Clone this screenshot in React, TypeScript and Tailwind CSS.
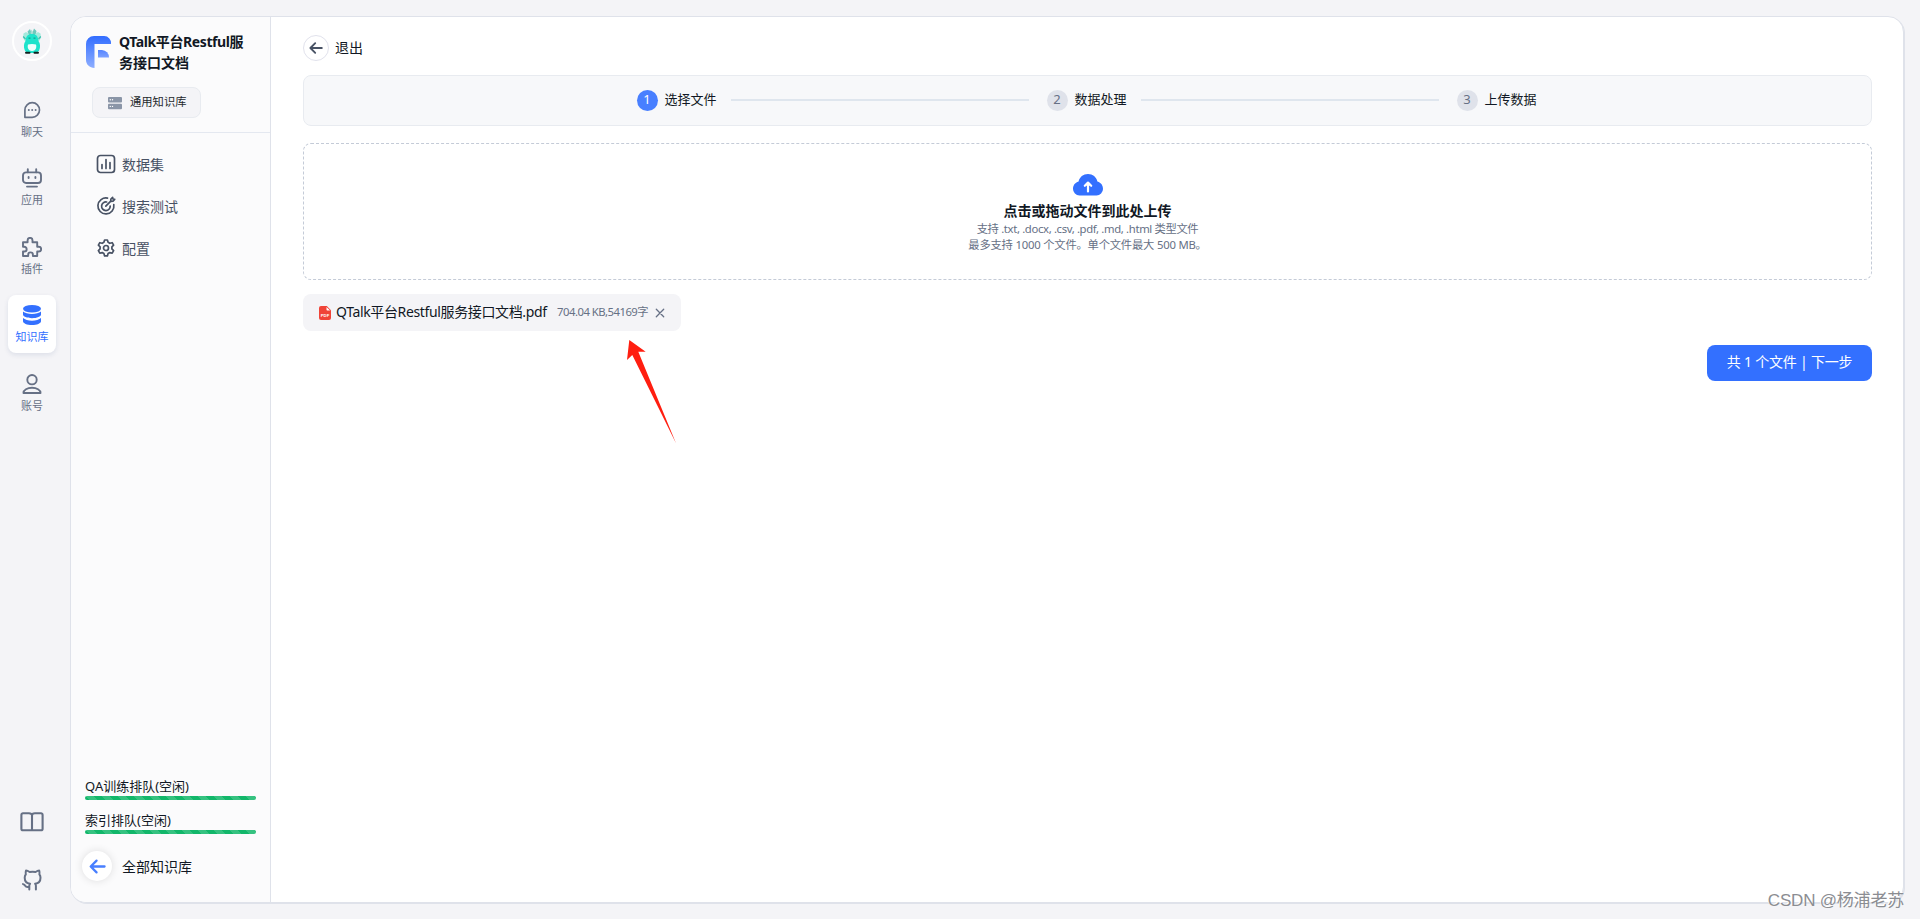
import type { ReactNode } from "react";

type IconProps = { className?: string };

function ChatIcon() {
  return (
    <svg viewBox="0 0 20 20" className="h-5 w-5" fill="none" stroke="currentColor" strokeWidth="1.7">
      <path d="M2.900 17.300V9.900A7.300 7.300 0 1 1 10.200 17.300Z" strokeLinejoin="round" />
      <g fill="currentColor" stroke="none">
        <circle cx="6.800" cy="10" r="1" />
        <circle cx="10.200" cy="10" r="1" />
        <circle cx="13.600" cy="10" r="1" />
      </g>
    </svg>
  );
}

function AppIcon() {
  return (
    <svg viewBox="0 0 20 20" className="h-5 w-5" fill="none" stroke="currentColor" strokeWidth="1.900" strokeLinecap="round">
      <rect x="1" y="4.400" width="18" height="10.600" rx="3" />
      <path d="M5.800 1.200v3M14.200 1.200v3M6.600 8.900v1.200M13.400 8.900v1.200M5 18.600h10" />
    </svg>
  );
}

function PluginIcon() {
  return (
    <svg viewBox="0 0 20 20" className="h-5 w-5" fill="none" stroke="currentColor" strokeWidth="1.900" strokeLinejoin="round">
      <path d="M1 5.200h4.600V3.300a2.300 2.300 0 0 1 4.900 0v1.900h4.700v4.600h1.600a2.300 2.300 0 0 1 0 4.700h-1.600V19h-4.300v-1.300a2.300 2.300 0 0 0-4.700 0V19H1v-4.500h1.300a2.300 2.300 0 0 0 0-4.700H1Z" />
    </svg>
  );
}

function DatabaseIcon() {
  return (
    <svg viewBox="0 0 20 20" className="h-5 w-5" fill="currentColor">
      <ellipse cx="10" cy="3.800" rx="9" ry="3.800" />
      <path d="M1 6.600c1.800 1.600 5.200 2.500 9 2.500s7.200-.9 9-2.500v2.900c0 2-4 3.700-9 3.700s-9-1.700-9-3.700Z" />
      <path d="M1 13.100c1.800 1.600 5.200 2.600 9 2.600s7.200-1 9-2.600v3.100c0 2.100-4 3.800-9 3.800s-9-1.700-9-3.800Z" />
    </svg>
  );
}

function AccountIcon() {
  return (
    <svg viewBox="0 0 20 20" className="h-5 w-5" fill="none" stroke="currentColor" strokeWidth="1.900" strokeLinejoin="round">
      <circle cx="10" cy="5.700" r="4.700" />
      <path d="M1.500 19c0-3 3.800-5.200 8.500-5.200s8.500 2.200 8.500 5.200Z" />
    </svg>
  );
}

function BookIcon() {
  return (
    <svg viewBox="0 0 24 20" className="h-5 w-6" fill="none" stroke="currentColor" strokeWidth="2.100" strokeLinejoin="round">
      <path d="M12 3.600C12 2 10.800 1.300 9 1.300H3A1.600 1.600 0 0 0 1.400 2.900v13.800a1.600 1.600 0 0 0 1.600 1.600h18a1.600 1.600 0 0 0 1.600-1.600V2.900A1.600 1.600 0 0 0 21 1.300h-6c-1.800 0-3 .7-3 2.300ZM12 3.600v14.500" />
    </svg>
  );
}

function GithubIcon() {
  return (
    <svg viewBox="0 0 22 22" className="h-[22px] w-[22px]" fill="none" stroke="currentColor" strokeWidth="2" strokeLinecap="round" strokeLinejoin="round">
      <path d="M8.300 20.600v-3.800c0-.9.3-1.600.8-2.100-3.300-.4-5.400-2-5.400-6 0-1.300.4-2.400 1.100-3.300-.3-1.300-.2-2.600.2-3.800 1.400.1 2.500.7 3.600 1.400a13 13 0 0 1 6 0c1.100-.7 2.200-1.300 3.600-1.400.4 1.200.5 2.500.2 3.800.7.900 1.100 2 1.100 3.300 0 4-2.100 5.600-5.400 6 .5.5.8 1.200.8 2.100v3.800M8.200 17.800c-1.700.5-3.300.3-4-1-.4-.8-1-1.400-2.200-1.700" />
    </svg>
  );
}

function Avatar() {
  return (
    <div className="flex h-10 w-10 shrink-0 items-center justify-center rounded-full border-2 border-white">
      <svg viewBox="0 0 20 26" className="h-[26px] w-5">
        <path d="M7 8 5.500 3.500 8 1l2 5 2-5.500L14.500 3 13.500 8Z" fill="#6fc9bd" />
        <path d="M9.300 1.500 11 4l-.8 4-1.700-3Z" fill="#a9ddd4" />
        <path d="M1.500 5.500 4 4l3 2v6l-4 1-2-3ZM18.500 5.500 16 4l-3 2v6l4 1 2-3Z" fill="#a4e9dc" />
        <path d="M1.200 8.500 3.500 11M18.800 8.500 16.500 11" stroke="#3cbfae" strokeWidth="1.200" />
        <path d="M10 6c4.500 0 6 2.500 6.500 7 1.800 2.500 2 6 .8 9-.6 2-2.500 3-7.300 3s-6.700-1-7.300-3c-1.200-3-1-6.500.8-9C4 8.500 5.500 6 10 6Z" fill="#1ee3cb" />
        <path d="M6 16.500c2-.8 6-.8 8 0 1 3-.5 6.500-4 6.500s-5-3.500-4-6.500Z" fill="#effffc" />
        <path d="M6.500 10.200h2M11.500 10.200h2" stroke="#199d8e" strokeWidth="1.200" />
        <path d="M4 24.700h3.500M12.500 24.700H16" stroke="#10201f" strokeWidth="2" strokeLinecap="round" />
      </svg>
    </div>
  );
}

function Logo() {
  return (
    <svg viewBox="0 0 25 32" className="h-8 w-[25px] shrink-0">
      <defs>
        <linearGradient id="logo" x1="0" y1="0" x2="0" y2="1">
          <stop offset="0" stopColor="#326dff" />
          <stop offset="1" stopColor="#8eaeff" />
        </linearGradient>
        <linearGradient id="logoInner" x1="0" y1="0" x2="0" y2="1">
          <stop offset="0" stopColor="#5584ff" />
          <stop offset="1" stopColor="#7da1ff" />
        </linearGradient>
      </defs>
      <path d="M8 0h10a7 7 0 0 1 7 8H8.500v24C3.500 31.500 0 28.500 0 24V8a8 8 0 0 1 8-8Z" fill="url(#logo)" />
      <path d="M12 14h4a7.500 7.500 0 0 1 7 7.500H12Z" fill="url(#logoInner)" />
    </svg>
  );
}

function ServerIcon() {
  return (
    <svg viewBox="0 0 14 14" className="h-3.5 w-3.5" fill="#8a95a7">
      <rect x="0" y="1" width="14" height="5.500" rx="1" />
      <rect x="0" y="7.700" width="14" height="5.500" rx="1" />
      <g fill="#fff">
        <circle cx="2.300" cy="3.700" r="0.700" />
        <circle cx="4.500" cy="3.700" r="0.700" />
        <circle cx="2.300" cy="10.400" r="0.700" />
        <circle cx="4.500" cy="10.400" r="0.700" />
      </g>
    </svg>
  );
}

function ChartIcon() {
  return (
    <svg viewBox="0 0 20 20" className="h-5 w-5" fill="none" stroke="currentColor" strokeWidth="1.700" strokeLinecap="round">
      <rect x="1.500" y="1.500" width="17" height="17" rx="3" />
      <path d="M6 10.500v4M10 5.500v9M14 8.500v6" />
    </svg>
  );
}

function TargetIcon() {
  return (
    <svg viewBox="0 0 20 20" className="h-5 w-5" fill="none" stroke="currentColor" strokeWidth="1.700" strokeLinecap="round" strokeLinejoin="round">
      <path d="M11.500 2.100A8 8 0 1 0 17.800 8.600" />
      <path d="M10.600 6a4.300 4.300 0 1 0 3.600 4" />
      <path d="m9.800 10.200 5-5M14.700 5.300l.2-2.300 1.700-1.600.4 1.600 1.700.4L17 5.100l-2.300.2Z" />
    </svg>
  );
}

function GearIcon() {
  return (
    <svg viewBox="0 0 20 20" className="h-5 w-5" fill="none" stroke="currentColor" strokeWidth="1.700" strokeLinejoin="round">
      <path d="M8.600 2h2.800l.7 2.300 1.700 1 2.400-.6 1.400 2.500-1.700 1.700v2l1.700 1.800-1.400 2.500-2.400-.6-1.700 1-.7 2.300H8.600l-.7-2.300-1.700-1-2.400.6-1.400-2.500 1.700-1.800v-2L2.400 7.200l1.400-2.500 2.400.6 1.700-1Z" />
      <circle cx="10" cy="10" r="2.500" />
    </svg>
  );
}

function ArrowLeft({ className }: IconProps) {
  return (
    <svg viewBox="0 0 18 18" className={className} fill="none" stroke="currentColor" strokeWidth="2.400" strokeLinecap="round" strokeLinejoin="round">
      <path d="M16.500 9H2M8 2.800 1.800 9 8 15.200" />
    </svg>
  );
}

function UploadIcon() {
  return (
    <svg viewBox="0 0 30 22" className="h-[22px] w-[30px]">
      <path d="M6.500 21.500A6.500 6.500 0 0 1 0 15c0-3.600 1.800-6.500 5.600-7.600C6.600 3.200 10.200 0 15 0s8.400 3.200 9.400 7.400C28.200 8.500 30 11.400 30 15a6.500 6.500 0 0 1-6.500 6.500Z" fill="#3370ff" />
      <path d="M15 17.500V9.500M11.800 11.800 15 8.600l3.200 3.200" fill="none" stroke="#fff" strokeWidth="2.200" strokeLinecap="round" strokeLinejoin="round" />
    </svg>
  );
}

function PdfIcon() {
  return (
    <svg viewBox="0 0 12 14" className="h-3.5 w-3 shrink-0">
      <path d="M2 0h5.800L12 4.200V12a2 2 0 0 1-2 2H2a2 2 0 0 1-2-2V2a2 2 0 0 1 2-2Z" fill="#f04438" />
      <path d="M7.500 1v2.600c0 .6.400 1 1 1h2.600Z" fill="#fff" />
      <text x="6" y="11" textAnchor="middle" fontSize="4.200" fontWeight="700" fill="#fff" fontFamily="Liberation Sans, sans-serif">
        PDF
      </text>
    </svg>
  );
}

const navItems = [
  { label: "聊天", icon: <ChatIcon /> },
  { label: "应用", icon: <AppIcon /> },
  { label: "插件", icon: <PluginIcon /> },
  { label: "知识库", icon: <DatabaseIcon />, active: true },
  { label: "账号", icon: <AccountIcon /> },
];

const menuItems = [
  { label: "数据集", icon: <ChartIcon /> },
  { label: "搜索测试", icon: <TargetIcon /> },
  { label: "配置", icon: <GearIcon /> },
];

function NavBar() {
  return (
    <nav className="flex w-[70px] shrink-0 flex-col items-center pt-[21px] pr-1.5 pb-7 text-[#667085]">
      <Avatar />
      <div className="mt-[28.500px] flex flex-col gap-[10.500px]">
        {navItems.map((item) => (
          <div
            key={item.label}
            className={
              item.active
                ? "flex h-[58px] w-12 flex-col items-center rounded-lg bg-white pt-2.5 text-[#3370ff] shadow-[0_2px_5px_rgba(19,51,107,0.1)]"
                : "flex h-[58px] w-12 flex-col items-center pt-2.5"
            }
          >
            {item.icon}
            <span className="mt-1 text-[11px] leading-4">{item.label}</span>
          </div>
        ))}
      </div>
      <div className="mt-auto flex flex-col items-center gap-[37px]">
        <BookIcon />
        <GithubIcon />
      </div>
    </nav>
  );
}

function Queue({ label }: { label: string }) {
  return (
    <div>
      <p className="text-[13px] leading-[17px] text-[#111824]">{label}</p>
      <div className="mt-px h-1 w-[171px] rounded-full bg-[#12b76a] bg-[linear-gradient(45deg,rgba(255,255,255,0.15)_25%,transparent_25%,transparent_50%,rgba(255,255,255,0.15)_50%,rgba(255,255,255,0.15)_75%,transparent_75%,transparent)] bg-[length:16px_16px]" />
    </div>
  );
}

function SideBar() {
  return (
    <aside className="flex w-[200px] shrink-0 flex-col border-r border-[#dfe2ea] bg-[#fbfbfc]">
      <div className="h-[116px] border-b border-[#e4e8f0] pt-3.5 pl-[15px]">
        <div className="flex items-center gap-2">
          <Logo />
          <h1 className="w-[140px] text-sm leading-[21px] font-bold text-[#111824]">
            <span className="tracking-[-0.4px] whitespace-nowrap">QTalk平台Restful服</span>
            <br />
            务接口文档
          </h1>
        </div>
        <div className="mt-3.5 ml-1.5 flex h-[31px] w-[109px] items-center gap-2 rounded-lg border border-[#e8ebf0] bg-[#f4f4f7] pl-[15px]">
          <ServerIcon />
          <span className="text-[11.300px] whitespace-nowrap text-[#24282c]">通用知识库</span>
        </div>
      </div>
      <ul className="mt-2.5 text-sm text-[#485264]">
        {menuItems.map((item) => (
          <li key={item.label} className="flex h-[42px] items-center gap-1.5 pl-[25px]">
            {item.icon}
            <span className="pt-px">{item.label}</span>
          </li>
        ))}
      </ul>
      <div className="mt-auto flex flex-col gap-3 pl-3.5">
        <Queue label="QA训练排队(空闲)" />
        <Queue label="索引排队(空闲)" />
      </div>
      <div className="mt-[17px] mb-[21px] ml-[11px] flex items-center gap-2.5 text-sm text-[#111824]">
        <span className="flex h-[30px] w-[30px] items-center justify-center rounded-full bg-white text-[#487fff] shadow-[0_0_8px_rgba(0,0,0,0.12)]">
          <ArrowLeft className="h-[17px] w-[17px]" />
        </span>
        <span className="pt-px">全部知识库</span>
      </div>
    </aside>
  );
}

function Step({ index, label, active }: { index: number; label: string; active?: boolean }) {
  return (
    <div className="flex items-center gap-[7px] text-[13px] whitespace-nowrap text-[#111824]">
      <span
        className={
          active
            ? "flex h-[21px] w-[21px] items-center justify-center rounded-full bg-[#487fff] text-white"
            : "flex h-[21px] w-[21px] items-center justify-center rounded-full bg-[#dfe2ea] text-[#667085]"
        }
      >
        {index}
      </span>
      <span className="w-[52px]">{label}</span>
    </div>
  );
}

function Divider() {
  return <div className="mr-[18px] ml-3.5 h-0.5 w-[298px] bg-[#dfe6ee]" />;
}

function Panel({ children }: { children: ReactNode }) {
  return (
    <main className="mt-4 mr-4 mb-4 flex flex-1 overflow-hidden rounded-2xl border border-[#dfe2ea] bg-white shadow-[1px_1px_0_#dfe2ea]">
      {children}
    </main>
  );
}

export default function App() {
  return (
    <div className="relative flex h-[919px] w-[1920px] overflow-hidden bg-[#f4f4f7] font-['Noto_Sans','Noto_Sans_CJK_SC',sans-serif]">
      <NavBar />
      <Panel>
        <SideBar />
        <section className="flex-1 pt-[18px] pr-[31px] pl-8">
          <div className="flex items-center gap-1.5 text-sm text-[#111824]">
            <span className="flex h-[26px] w-[26px] items-center justify-center rounded-full border border-[#e1e2ec] text-[#485264]">
              <ArrowLeft className="h-3.5 w-3.5" />
            </span>
            退出
          </div>

          <div className="mt-3.5 flex h-[51px] items-center justify-center rounded-lg border border-[#e8ebf0] bg-[#f7f8fa] pr-0.5 pb-px">
            <Step index={1} label="选择文件" active />
            <Divider />
            <Step index={2} label="数据处理" />
            <Divider />
            <Step index={3} label="上传数据" />
          </div>

          <div className="mt-[17px] flex h-[137px] flex-col items-center rounded-lg border border-dashed border-[#c4cbd7] pt-[30px]">
            <UploadIcon />
            <p className="mt-[5px] text-sm leading-5 font-bold text-[#111824]">点击或拖动文件到此处上传</p>
            <p className="text-[11.300px] leading-4 tracking-[-0.35px] text-[#667085]">支持 .txt, .docx, .csv, .pdf, .md, .html 类型文件</p>
            <p className="text-[11.300px] leading-4 tracking-[-0.2px] text-[#667085]">最多支持 1000 个文件。单个文件最大 500 MB。</p>
          </div>

          <div className="mt-3.5 flex h-[37px] w-[378px] items-center rounded-lg bg-[#f4f4f7] pl-4 whitespace-nowrap">
            <PdfIcon />
            <span className="ml-[5px] w-[211px] pb-px text-sm tracking-[-0.36px] text-[#111824]">QTalk平台Restful服务接口文档.pdf</span>
            <span className="ml-2.5 w-[93px] text-[11.300px] tracking-[-0.5px] text-[#667085]">704.04 KB,54169字</span>
            <svg viewBox="0 0 8 8" className="ml-1.5 h-2 w-2 overflow-visible" stroke="#667085" strokeWidth="1.300" strokeLinecap="round">
              <path d="M.300.300l7.400 7.400M7.700.300l-7.400 7.400" />
            </svg>
          </div>

          <div className="mt-3.5 flex justify-end">
            <button className="h-9 w-[165px] rounded-lg bg-[#3370ff] pb-0.5 text-sm tracking-[-0.2px] text-white">
              共 1 个文件 | 下一步
            </button>
          </div>
        </section>
      </Panel>

      {/* hand-drawn pointer over the page */}
      <svg viewBox="0 0 50 104" className="absolute top-[340px] left-[627px] h-[104px] w-[50px]" fill="#ff1e10">
        <path d="M2.300 0 18.700 11.700 11.300 11.700 49 103.300 5.300 15 0 20Z" />
      </svg>
      <span className="absolute top-[889px] right-4 font-['Liberation_Sans','Noto_Sans_CJK_SC',sans-serif] text-[17px] leading-6 tracking-[-0.2px] whitespace-nowrap text-[#8b8d92] [text-shadow:-1px_-1px_0_#fff]">
        CSDN @杨浦老苏
      </span>
    </div>
  );
}
